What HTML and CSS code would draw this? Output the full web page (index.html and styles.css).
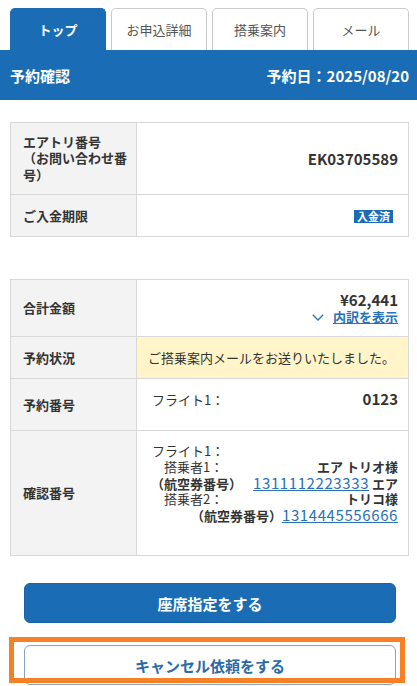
FILE: index.html
```html
<!DOCTYPE html>
<html lang="ja">
<head>
<meta charset="utf-8">
<title>予約確認</title>
<link rel="stylesheet" href="styles.css">
</head>
<body>
<nav class="tabs">
  <div class="tab active">トップ</div>
  <div class="tab">お申込詳細</div>
  <div class="tab">搭乗案内</div>
  <div class="tab">メール</div>
</nav>
<header class="bar">
  <h1>予約確認</h1>
  <span class="date">予約日：2025/08/20</span>
</header>
<main class="content">
  <table class="info">
    <colgroup><col class="c-label"><col></colgroup>
    <tr class="h72">
      <th class="multi">エアトリ番号<br>（お問い合わせ番号）</th>
      <td class="strong">EK03705589</td>
    </tr>
    <tr class="h42">
      <th>ご入金期限</th>
      <td><span class="badge">入金済</span></td>
    </tr>
  </table>

  <table class="info">
    <colgroup><col class="c-label"><col></colgroup>
    <tr class="h57">
      <th>合計金額</th>
      <td>
        <div class="strong price">¥62,441</div>
        <a class="toggle" href="#"><svg class="chev" width="12" height="7" viewBox="0 0 12 7"><path d="M0.8 0.8L6 6l5.2-5.2" fill="none" stroke="#2a72b8" stroke-width="1.3"/></svg><span class="toggle-text">内訳を表示</span></a>
      </td>
    </tr>
    <tr class="h42">
      <th>予約状況</th>
      <td class="status">ご搭乗案内メールをお送りいたしました。</td>
    </tr>
    <tr class="h52">
      <th>予約番号</th>
      <td class="top">
        <div class="line split"><span>フライト1：</span><span class="strong">0123</span></div>
      </td>
    </tr>
    <tr class="h125">
      <th>確認番号</th>
      <td class="top conf">
        <div class="line left">フライト1：</div>
        <div class="line split pax"><span>搭乗者1：</span><b>エア トリオ様</b></div>
        <div class="line"><b>（航空券番号）</b><a class="num gap" href="#">1311112223333</a> <b>エア</b></div>
        <div class="line split pax"><span>搭乗者2：</span><b>トリコ様</b></div>
        <div class="line"><b>（航空券番号）</b><a class="num" href="#">1314445556666</a></div>
      </td>
    </tr>
  </table>

  <div class="actions">
    <button class="btn primary" type="button">座席指定をする</button>
    <button class="btn secondary" type="button">キャンセル依頼をする</button>
  </div>
</main>
<div class="highlight"></div>
</body>
</html>
```
FILE: styles.css
```css
* { box-sizing: border-box; }
html, body { margin: 0; padding: 0; }
body {
  position: relative;
  width: 417px;
  min-height: 686px;
  background: #fff;
  color: #333;
  font-family: "Noto Sans CJK JP", "Noto Sans", sans-serif;
  font-size: 13px;
  overflow: hidden;
}

.tabs {
  display: grid;
  grid-template-columns: repeat(4, 1fr);
  gap: 5px;
  padding: 8px 8px 0 10px;
}
.tab {
  height: 42px;
  display: flex;
  align-items: center;
  justify-content: center;
  background: #fff;
  border: 1px solid #cacaca;
  border-bottom: none;
  border-radius: 5px 5px 0 0;
  color: #555;
  font-size: 13px;
}
.tab.active {
  background: #1a6db4;
  border-color: #1a6db4;
  color: #fff;
  font-weight: bold;
}

.bar {
  height: 50px;
  background: #1a6db4;
  color: #fff;
  display: flex;
  align-items: center;
  justify-content: space-between;
  padding: 0 8px 0 10px;
}
.bar h1 { margin: 0; font-size: 15px; font-weight: bold; }
.bar .date { font-size: 15px; font-weight: bold; }

.content { padding: 22px 8px 0 10px; }

.info {
  width: 100%;
  border-collapse: collapse;
  table-layout: fixed;
  margin-bottom: 42px;
}
.info col.c-label { width: 126px; }
.info th, .info td {
  border: 1px solid #d8d8d8;
  line-height: 16px;
  vertical-align: middle;
}
.info th {
  background: #f3f3f3;
  text-align: left;
  font-weight: bold;
  font-size: 13px;
  padding: 0 8px 0 12px;
}
.info th.multi { line-height: 16.5px; }
.info td {
  text-align: right;
  padding: 0 10px 0 11px;
}
.info td.top { vertical-align: top; padding-top: 12px; }
.info td.conf { padding-top: 12px; }

.h72 { height: 72px; }
.h42 { height: 42px; }
.h57 { height: 57px; }
.h52 { height: 52px; }
.h125 { height: 125px; }

.strong { font-weight: bold; font-size: 15px; }
.price { line-height: 17px; }

.badge {
  display: inline-block;
  background: #1a6db4;
  color: #fff;
  font-weight: bold;
  font-size: 11px;
  line-height: 13px;
  padding: 0 3px;
  margin-right: 5px;
  vertical-align: middle;
}

.toggle {
  display: inline-flex;
  align-items: center;
  gap: 9px;
  color: #2a72b8;
  font-weight: bold;
  font-size: 13px;
  text-decoration: none;
}
.toggle-text { text-decoration: underline; }
.chev { display: block; margin-top: 2px; }

.status {
  background: #fff5c9;
  text-align: left !important;
}

.line { line-height: 15.75px; text-align: right; }
.line.left { text-align: left; padding-left: 4px; }
.line.split {
  display: flex;
  justify-content: space-between;
  align-items: baseline;
  padding-left: 4px;
}
.line.split.pax { padding-left: 16px; }
.line b { font-weight: bold; }

.num {
  color: #2a72b8;
  font-size: 15px;
  letter-spacing: 0.6px;
  text-decoration: underline;
}
.num.gap { margin-left: 11px; }

.actions {
  display: flex;
  flex-direction: column;
  gap: 22px;
  padding: 27px 13px 0 14px;
  margin-top: -42px;
}
.btn {
  height: 40px;
  border-radius: 6px;
  font-family: inherit;
  font-size: 15px;
  font-weight: bold;
}
.btn.primary {
  background: #1a6db4;
  border: 1px solid #1a62a3;
  color: #fff;
}
.btn.secondary {
  background: #fff;
  border: 1px solid #86a3c1;
  color: #2c6aa7;
}

.highlight {
  position: absolute;
  left: 9px;
  top: 637px;
  width: 396px;
  height: 46px;
  border: 5px solid #f58025;
}
```
